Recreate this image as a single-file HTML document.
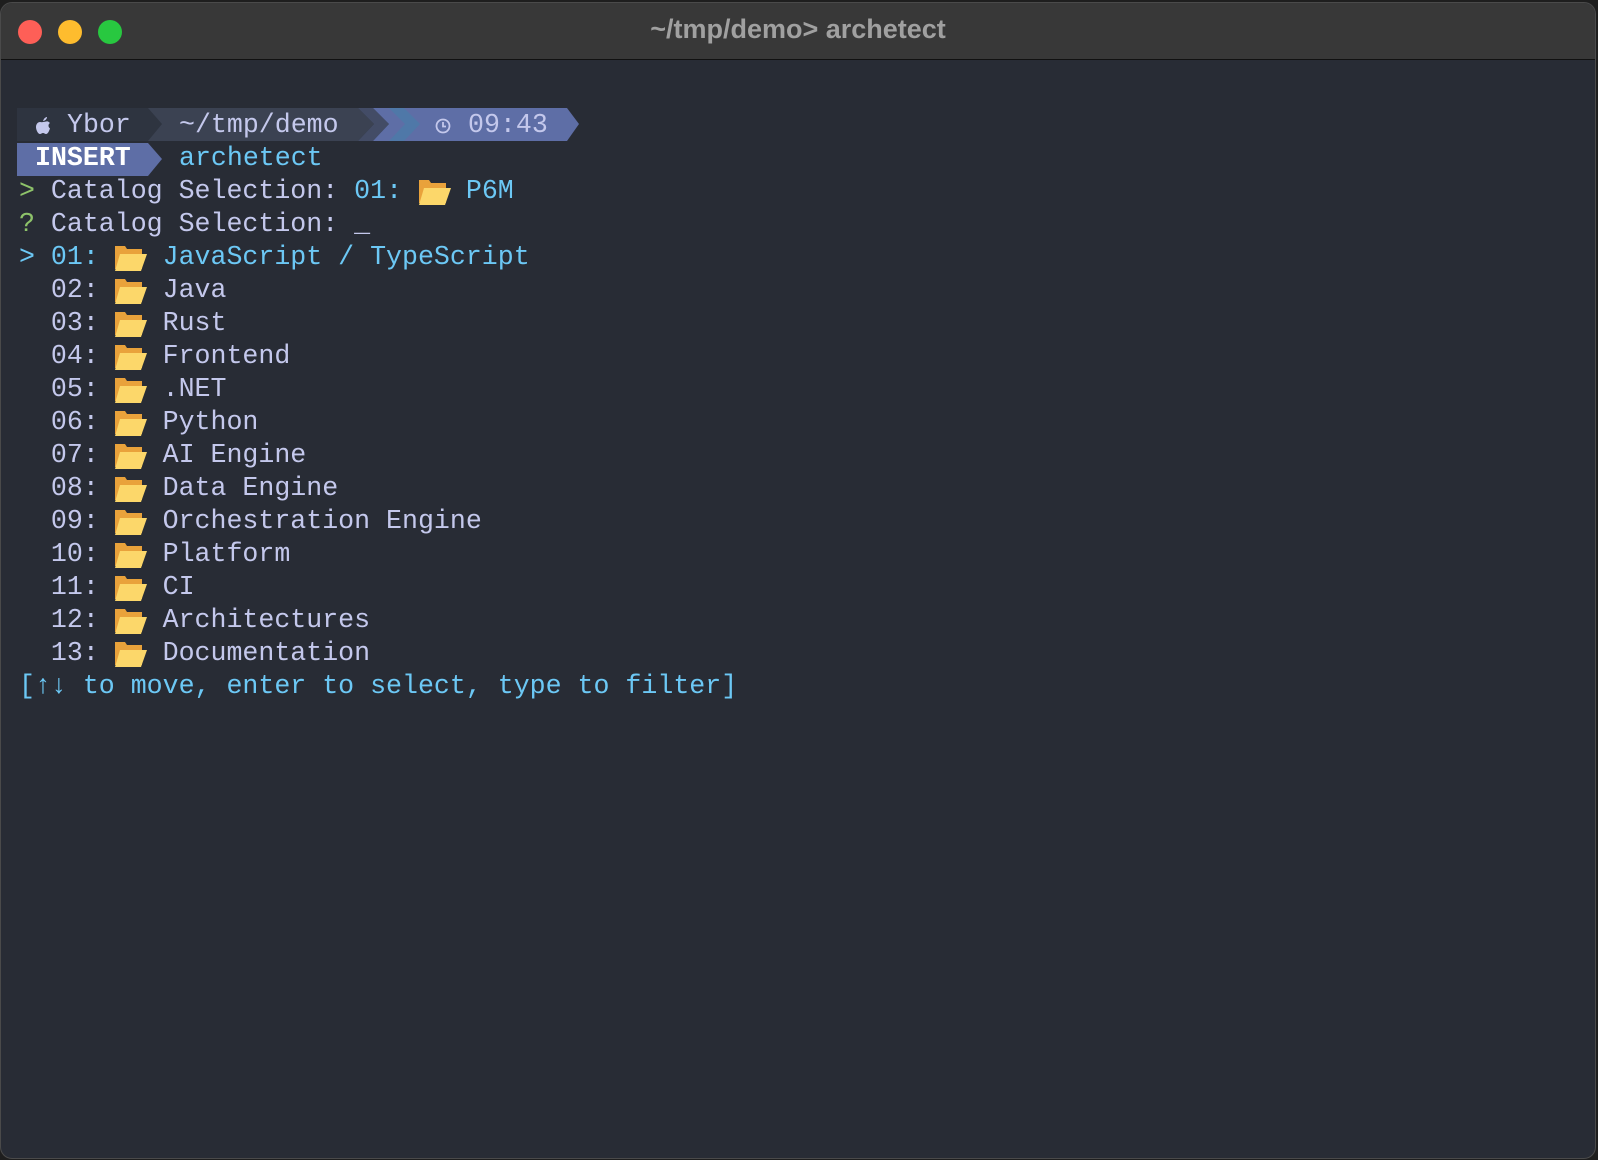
<!DOCTYPE html>
<html><head><meta charset="utf-8"><style>
html,body{margin:0;padding:0;background:#1e1e1e;width:1598px;height:1160px;overflow:hidden}
.win{position:absolute;left:0;top:2px;width:1596px;height:1157px;background:#282c35;border-radius:12px;overflow:hidden;border:1px solid #4a4a4a;box-sizing:border-box}
.tb{position:absolute;left:0;top:0;right:0;height:56px;background:#383838;border-bottom:1px solid #111}
.dot{position:absolute;top:17px;width:24px;height:24px;border-radius:50%}
.title{position:absolute;left:0;right:0;top:11px;text-align:center;font:bold 27px "Liberation Sans",sans-serif;color:#a0a0a0}
.t{position:absolute;font-family:"Liberation Mono",monospace;font-size:26.6px;line-height:33px;white-space:pre;color:#c4c8ec}
.c{color:#6cc8f5}.g{color:#8ec36a}
svg.f{position:absolute}
</style></head><body>
<div class="win">
<div class="tb">
<div class="dot" style="left:17px;background:#fe5f57"></div>
<div class="dot" style="left:57px;background:#febc2e"></div>
<div class="dot" style="left:97px;background:#28c840"></div>
<div class="title">~/tmp/demo&gt; archetect</div>
</div>
<svg style="position:absolute;left:0;top:105px" width="700" height="70">
<polygon points="16,0 357,0 373,16 357,33 16,33" fill="#3b4252"/>
<polygon points="16,0 147,0 161,16 147,33 16,33" fill="#2e3440"/>
<polygon points="357,0 372,0 388,16 372,33 357,33 373,16" fill="#434c66"/>
<polygon points="372,0 403,0 566,0 578,16 566,33 403,33 372,33 388,16" fill="#5e6ea6"/>
<polygon points="388,0 403,0 419,16 403,33 388,33 404,16" fill="#4f78a8"/>
<polygon points="16,35 147,35 161,51 147,68 16,68" fill="#5e6ea6"/>
</svg>
<svg style="position:absolute;left:33px;top:113px" width="18" height="20" viewBox="0 0 18 20"><path d="M9 5C10 2 12 1 13 1C13 3 11 5 9 5ZM9 6C11 6 12 5 14 5.5C15 6 16 7 16 7C14 8 14 11 16 12.5C15 15 14 18 12 18C11 18 10 17 9 17C8 17 7 18 6 18C4 18 2 14 2 11C2 8 4 6 6 6C7 6 8 6.5 9 6Z" fill="#c4c8ec"/></svg>
<div class="t" style="left:66px;top:106px">Ybor</div>
<div class="t" style="left:178px;top:106px">~/tmp/demo</div>
<svg style="position:absolute;left:433px;top:114px" width="18" height="18" viewBox="0 0 18 18"><circle cx="9" cy="9" r="6.5" fill="none" stroke="#c4c8ec" stroke-width="1.8"/><path d="M9 5V9.5H12" fill="none" stroke="#c4c8ec" stroke-width="1.8"/></svg>
<div class="t" style="left:467px;top:106px">09:43</div>
<div class="t" style="left:34px;top:139px;color:#fff;font-weight:bold">INSERT</div>
<div class="t c" style="left:178px;top:139px">archetect</div>

<div class="t" style="left:18px;top:172px"><span class="g">&gt;</span> Catalog Selection: <span class="c">01:    P6M</span></div>
<div class="t" style="left:18px;top:205px"><span class="g">?</span> Catalog Selection: _</div>
<div class="t c" style="left:18px;top:238px">&gt; 01:    JavaScript / TypeScript</div>
<div class="t" style="left:18px;top:271px">  02:    Java</div>
<div class="t" style="left:18px;top:304px">  03:    Rust</div>
<div class="t" style="left:18px;top:337px">  04:    Frontend</div>
<div class="t" style="left:18px;top:370px">  05:    .NET</div>
<div class="t" style="left:18px;top:403px">  06:    Python</div>
<div class="t" style="left:18px;top:436px">  07:    AI Engine</div>
<div class="t" style="left:18px;top:469px">  08:    Data Engine</div>
<div class="t" style="left:18px;top:502px">  09:    Orchestration Engine</div>
<div class="t" style="left:18px;top:535px">  10:    Platform</div>
<div class="t" style="left:18px;top:568px">  11:    CI</div>
<div class="t" style="left:18px;top:601px">  12:    Architectures</div>
<div class="t" style="left:18px;top:634px">  13:    Documentation</div>
<div class="t c" style="left:18px;top:667px">[↑↓ to move, enter to select, type to filter]</div>

<svg width="0" height="0" style="position:absolute"><defs><g id="fd"><path d="M1 2H11L13 5H28V25H1Z" fill="#e9a23b"/><path d="M6 10H33L27 27H1Z" fill="#fcd76a"/></g></defs></svg>
<svg class="f" style="left:417px;top:175px" width="34" height="28"><use href="#fd"/></svg>
<svg class="f" style="left:113px;top:241px" width="34" height="28"><use href="#fd"/></svg>
<svg class="f" style="left:113px;top:274px" width="34" height="28"><use href="#fd"/></svg>
<svg class="f" style="left:113px;top:307px" width="34" height="28"><use href="#fd"/></svg>
<svg class="f" style="left:113px;top:340px" width="34" height="28"><use href="#fd"/></svg>
<svg class="f" style="left:113px;top:373px" width="34" height="28"><use href="#fd"/></svg>
<svg class="f" style="left:113px;top:406px" width="34" height="28"><use href="#fd"/></svg>
<svg class="f" style="left:113px;top:439px" width="34" height="28"><use href="#fd"/></svg>
<svg class="f" style="left:113px;top:472px" width="34" height="28"><use href="#fd"/></svg>
<svg class="f" style="left:113px;top:505px" width="34" height="28"><use href="#fd"/></svg>
<svg class="f" style="left:113px;top:538px" width="34" height="28"><use href="#fd"/></svg>
<svg class="f" style="left:113px;top:571px" width="34" height="28"><use href="#fd"/></svg>
<svg class="f" style="left:113px;top:604px" width="34" height="28"><use href="#fd"/></svg>
<svg class="f" style="left:113px;top:637px" width="34" height="28"><use href="#fd"/></svg>
</div>
</body></html>
